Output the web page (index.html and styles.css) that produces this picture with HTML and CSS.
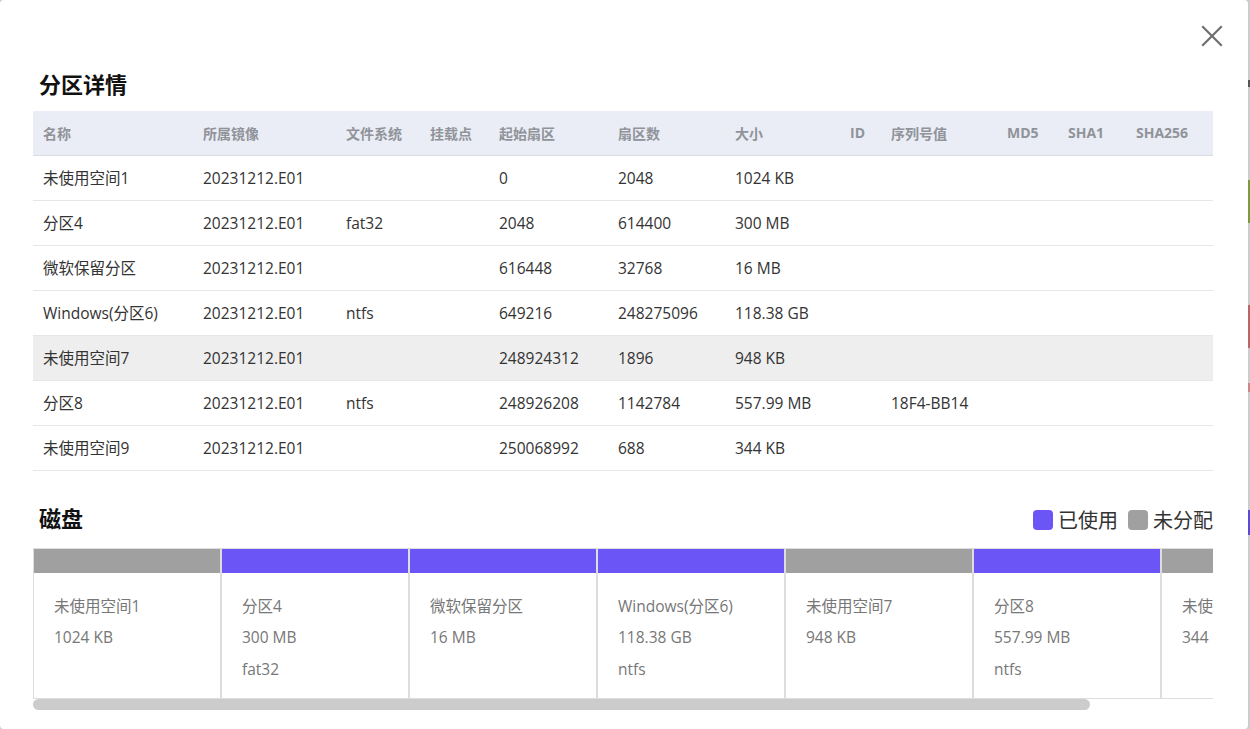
FILE: index.html
```html
<!DOCTYPE html>
<html lang="zh-CN">
<head>
<meta charset="utf-8">
<title>分区详情</title>
<link rel="stylesheet" href="styles.css">
</head>
<body>
<div class="screen">
  <div class="modal">
    <button class="close" aria-label="关闭">
      <svg width="22" height="22" viewBox="0 0 22 22"><path d="M2 2 L20 20 M20 2 L2 20" stroke="#6f6f6f" stroke-width="2.2" fill="none" stroke-linecap="square"/></svg>
    </button>
    <h2 class="title">分区详情</h2>
    <table class="ptable">
      <colgroup>
        <col style="width:160px"><col style="width:143px"><col style="width:84px"><col style="width:69px"><col style="width:119px"><col style="width:117px"><col style="width:115px"><col style="width:41px"><col style="width:116px"><col style="width:61px"><col style="width:68px"><col style="width:87px">
      </colgroup>
      <thead>
        <tr><th>名称</th><th>所属镜像</th><th>文件系统</th><th>挂载点</th><th>起始扇区</th><th>扇区数</th><th>大小</th><th>ID</th><th>序列号值</th><th>MD5</th><th>SHA1</th><th>SHA256</th></tr>
      </thead>
      <tbody>
        <tr><td>未使用空间1</td><td>20231212.E01</td><td></td><td></td><td>0</td><td>2048</td><td>1024 KB</td><td></td><td></td><td></td><td></td><td></td></tr>
        <tr><td>分区4</td><td>20231212.E01</td><td>fat32</td><td></td><td>2048</td><td>614400</td><td>300 MB</td><td></td><td></td><td></td><td></td><td></td></tr>
        <tr><td>微软保留分区</td><td>20231212.E01</td><td></td><td></td><td>616448</td><td>32768</td><td>16 MB</td><td></td><td></td><td></td><td></td><td></td></tr>
        <tr><td>Windows(分区6)</td><td>20231212.E01</td><td>ntfs</td><td></td><td>649216</td><td>248275096</td><td>118.38 GB</td><td></td><td></td><td></td><td></td><td></td></tr>
        <tr class="hover"><td>未使用空间7</td><td>20231212.E01</td><td></td><td></td><td>248924312</td><td>1896</td><td>948 KB</td><td></td><td></td><td></td><td></td><td></td></tr>
        <tr><td>分区8</td><td>20231212.E01</td><td>ntfs</td><td></td><td>248926208</td><td>1142784</td><td>557.99 MB</td><td></td><td>18F4-BB14</td><td></td><td></td><td></td></tr>
        <tr><td>未使用空间9</td><td>20231212.E01</td><td></td><td></td><td>250068992</td><td>688</td><td>344 KB</td><td></td><td></td><td></td><td></td><td></td></tr>
      </tbody>
    </table>

    <div class="disk-head">
      <h2 class="title">磁盘</h2>
      <div class="legend">
        <span class="swatch used"></span><span class="ltext">已使用</span>
        <span class="swatch free"></span><span class="ltext">未分配</span>
      </div>
    </div>
    <div class="disk-wrap">
      <div class="disk">
        <div class="card"><div class="bar free"></div><div class="info"><div>未使用空间1</div><div>1024 KB</div></div></div>
        <div class="card"><div class="bar used"></div><div class="info"><div>分区4</div><div>300 MB</div><div>fat32</div></div></div>
        <div class="card"><div class="bar used"></div><div class="info"><div>微软保留分区</div><div>16 MB</div></div></div>
        <div class="card"><div class="bar used"></div><div class="info"><div>Windows(分区6)</div><div>118.38 GB</div><div>ntfs</div></div></div>
        <div class="card"><div class="bar free"></div><div class="info"><div>未使用空间7</div><div>948 KB</div></div></div>
        <div class="card"><div class="bar used"></div><div class="info"><div>分区8</div><div>557.99 MB</div><div>ntfs</div></div></div>
        <div class="card"><div class="bar free"></div><div class="info"><div>未使用空间9</div><div>344 KB</div></div></div>
      </div>
      <div class="scrollbar"><div class="thumb"></div></div>
    </div>
  </div>
  <div class="edge">
    <span class="bit dark"></span>
    <span class="bit green"></span>
    <span class="bit red"></span>
    <span class="bit red small"></span>
    <span class="bit purple"></span>
  </div>
</div>
</body>
</html>
```

FILE: styles.css
```css
* { box-sizing: border-box; }
html, body { margin: 0; padding: 0; }
body {
  background: #cfcfcf;
  font-family: "Open Sans", "Noto Sans CJK SC", sans-serif;
  color: #333;
  overflow: hidden;
}
.screen {
  display: flex;
  width: 1250px;
  height: 729px;
}
.modal {
  position: relative;
  width: 1248px;
  height: 729px;
  flex-shrink: 0;
  background: #fff;
  border-radius: 4px;
  padding: 68px 35px 0 33px;
}
.close {
  position: absolute;
  left: 1201px;
  top: 25px;
  width: 22px;
  height: 22px;
  padding: 0;
  border: 0;
  background: none;
  cursor: pointer;
}
.close svg { display: block; }
.title {
  margin: 0 0 0 6px;
  font-family: "Noto Sans CJK SC", sans-serif;
  font-size: 22px;
  font-weight: 700;
  line-height: 30px;
  color: #111;
}
.ptable {
  margin-top: 13px;
  width: 1180px;
  table-layout: fixed;
  border-collapse: collapse;
  font-size: 15.5px;
}
.ptable th {
  height: 44px;
  padding: 0 0 0 10px;
  text-align: left;
  background: #eaedf5;
  color: #909399;
  font-size: 14px;
  font-weight: 700;
  border-bottom: 1px solid #d9dbe2;
  white-space: nowrap;
}
.ptable td {
  height: 45px;
  padding: 0 0 0 10px;
  border-bottom: 1px solid #e6e6e6;
  white-space: nowrap;
  color: #333;
}
.ptable tr.hover td { background: #eeeeee; }

.disk-head {
  margin-top: 31px;
  display: flex;
  align-items: center;
  justify-content: space-between;
  width: 1180px;
  height: 30px;
}
.legend {
  display: flex;
  align-items: center;
  font-family: "Noto Sans CJK SC", sans-serif;
  font-size: 20px;
  color: #333;
  line-height: 26px;
  padding-top: 6px;
}
.swatch {
  width: 20px;
  height: 20px;
  border-radius: 4px;
  margin-right: 5px;
}
.swatch.used { background: #6c55f6; }
.swatch.free { background: #a0a0a0; margin-left: 10px; }

.disk-wrap {
  margin-top: 16px;
  width: 1180px;
}
.disk {
  display: flex;
  overflow: hidden;
}
.scrollbar {
  height: 11px;
}
.thumb {
  width: 1057px;
  height: 11px;
  background: #cccccc;
  border-radius: 6px;
}
.card {
  flex: 0 0 188px;
  width: 188px;
  border: 1px solid #dddddd;
}
.bar { height: 24px; }
.bar.used { background: #6c55f6; }
.bar.free { background: #a0a0a0; }
.info {
  height: 125px;
  padding: 18px 0 0 20px;
  font-size: 15.5px;
  line-height: 31.5px;
  color: #777;
  white-space: nowrap;
}

.edge {
  flex: 1;
  display: flex;
  flex-direction: column;
  align-items: flex-end;
  background: #cccccc;
}
.bit { display: block; width: 2px; }
.bit.dark { margin-top: 80px; height: 7px; background: #555; }
.bit.green { margin-top: 93px; height: 43px; background: #7c9a3e; }
.bit.red { margin-top: 82px; height: 43px; background: #b86666; }
.bit.red.small { margin-top: 35px; height: 9px; background: #c88; }
.bit.purple { margin-top: 118px; height: 25px; background: #5a4ad8; }
```
